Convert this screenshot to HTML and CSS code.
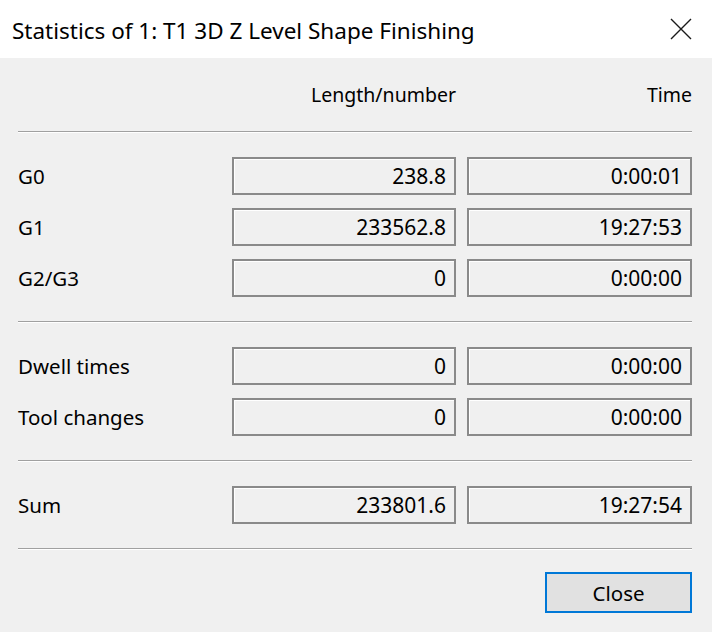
FILE: index.html
```html
<!DOCTYPE html>
<html>
<head>
<meta charset="utf-8">
<link rel="stylesheet" href="styles.css">
</head>
<body>
<div class="window">
  <div class="titlebar">
    <span class="title">Statistics of 1: T1 3D Z Level Shape Finishing</span>
    <svg class="close-x" width="22" height="22" viewBox="0 0 22 22"><path d="M1 1 L21 21 M21 1 L1 21" stroke="#1a1a1a" stroke-width="1.4" fill="none"/></svg>
  </div>
  <div class="content">
    <div class="grid header">
      <span></span>
      <span class="colhead">Length/number</span>
      <span class="colhead">Time</span>
    </div>
    <div class="sep"></div>
    <div class="section first">
      <div class="grid row"><span class="label">G0</span><div class="field">238.8</div><div class="field">0:00:01</div></div>
      <div class="grid row"><span class="label">G1</span><div class="field">233562.8</div><div class="field">19:27:53</div></div>
      <div class="grid row"><span class="label">G2/G3</span><div class="field">0</div><div class="field">0:00:00</div></div>
    </div>
    <div class="sep"></div>
    <div class="section">
      <div class="grid row"><span class="label">Dwell times</span><div class="field">0</div><div class="field">0:00:00</div></div>
      <div class="grid row"><span class="label">Tool changes</span><div class="field">0</div><div class="field">0:00:00</div></div>
    </div>
    <div class="sep"></div>
    <div class="section">
      <div class="grid row"><span class="label">Sum</span><div class="field">233801.6</div><div class="field">19:27:54</div></div>
    </div>
    <div class="sep"></div>
    <div class="footer">
      <button class="btn">Close</button>
    </div>
  </div>
</div>
</body>
</html>
```
FILE: styles.css
```css
html, body {
  margin: 0;
  padding: 0;
  background: #f0f0f0;
}
body {
  font-family: "Noto Sans", "Open Sans", sans-serif;
  color: #000;
  width: 712px;
  height: 632px;
  overflow: hidden;
}
.titlebar {
  height: 58px;
  background: #ffffff;
  display: flex;
  align-items: center;
  justify-content: space-between;
  padding: 0 20px 0 12px;
}
.title {
  font-size: 22.5px;
  color: #000;
  position: relative;
  top: 1px;
}
.close-x {
  display: block;
}
.content {
  padding: 0 20px 0 18px;
}
.grid {
  display: grid;
  grid-template-columns: 203px 224px 225px;
  column-gap: 11px;
  align-items: center;
}
.header {
  height: 73px;
}
.colhead {
  text-align: right;
  font-size: 19.5px;
}
.sep {
  height: 1px;
  background: #a0a0a0;
  border-bottom: 1px solid #ffffff;
}
.section {
  display: flex;
  flex-direction: column;
  gap: 13px;
  padding: 24px 0 24px;
}
.section.first {
  padding-top: 24px;
}
.label {
  font-size: 20.5px;
}
.field {
  height: 38px;
  box-sizing: border-box;
  border: 2px solid #8a8a8a;
  box-shadow: inset 1px 1px 0 #ffffff;
  background: #f0f0f0;
  text-align: right;
  font-size: 21px;
  line-height: 34px;
  padding-right: 8px;
}
.footer {
  display: flex;
  justify-content: flex-end;
  padding-top: 22px;
}
.btn {
  width: 147px;
  height: 41px;
  box-sizing: border-box;
  border: 2px solid #0078d7;
  background: #e1e1e1;
  font-family: "Noto Sans", "Open Sans", sans-serif;
  font-size: 20.5px;
  color: #000;
  padding: 0;
}
```
